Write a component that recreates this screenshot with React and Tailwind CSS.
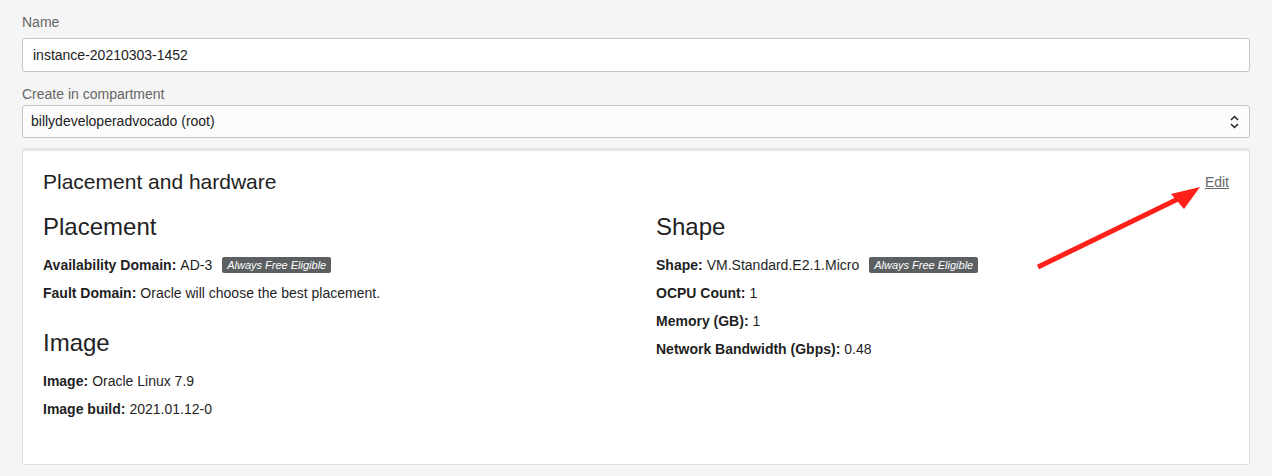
import React from "react";

const font = { fontFamily: '"Liberation Sans", Arial, Helvetica, sans-serif' };

function Badge() {
  return (
    <span className="ml-[10px] inline-flex h-[16px] items-center rounded-[2px] bg-[#5c5f62] px-[5px] text-[11px] italic leading-none text-white">
      Always Free Eligible
    </span>
  );
}

function Row({ label, value, badge }) {
  return (
    <div className="flex h-[28px] items-center text-[14px] text-[#1f1f1f]">
      <span className="font-bold">{label}</span>
      <span className="ml-[4px]">{value}</span>
      {badge && <Badge />}
    </div>
  );
}

export default function App() {
  return (
    <div className="relative h-[476px] w-[1272px] bg-[#f5f5f5] px-[22px] pt-[12px]" style={font}>
      <div className="text-[14px] leading-[20px] text-[#666]">Name</div>
      <div className="mt-[6px] flex h-[34px] items-center rounded-[3px] border border-[#c4c6cc] bg-white px-[10px] text-[14px] text-[#222]">
        instance-20210303-1452
      </div>
      <div className="mt-[12px] text-[14px] leading-[20px] text-[#666]">Create in compartment</div>
      <div className="mt-[1px] flex h-[33px] items-center justify-between rounded-[3px] border border-[#c4c6cc] bg-[#fcfcfc] pl-[8px] pr-[10px] text-[14px] text-[#222]">
        <span>billydeveloperadvocado (root)</span>
        <svg width="9" height="14" viewBox="0 0 9 14" fill="none" stroke="#222" strokeWidth="1.5">
          <path d="M1 5 L4.5 1.5 L8 5" />
          <path d="M1 9 L4.5 12.5 L8 9" />
        </svg>
      </div>
      <div className="mt-[10px] h-[317px] rounded-[3px] border border-[#dedfe2] border-t-[3px] border-t-[#e3e3e6] bg-white pl-[20px] pr-[20px] pt-[18px]">
        <div className="flex items-center justify-between">
          <div className="text-[21px] leading-[26px] text-[#222]">Placement and hardware</div>
          <a className="text-[14px] text-[#666] underline">Edit</a>
        </div>
        <div className="mt-[14px] grid grid-cols-2 gap-x-[40px]">
          <div>
            <div className="text-[24px] leading-[36px] text-[#222]">Placement</div>
            <div className="mt-[6px]">
              <Row label="Availability Domain:" value="AD-3" badge />
              <Row label="Fault Domain:" value="Oracle will choose the best placement." />
            </div>
            <div className="mt-[18px] text-[24px] leading-[36px] text-[#222]">Image</div>
            <div className="mt-[6px]">
              <Row label="Image:" value="Oracle Linux 7.9" />
              <Row label="Image build:" value="2021.01.12-0" />
            </div>
          </div>
          <div>
            <div className="text-[24px] leading-[36px] text-[#222]">Shape</div>
            <div className="mt-[6px]">
              <Row label="Shape:" value="VM.Standard.E2.1.Micro" badge />
              <Row label="OCPU Count:" value="1" />
              <Row label="Memory (GB):" value="1" />
              <Row label="Network Bandwidth (Gbps):" value="0.48" />
            </div>
          </div>
        </div>
      </div>
      <svg className="absolute left-0 top-0" width="1272" height="476" style={{ pointerEvents: "none" }}>
        <line x1="1038" y1="267" x2="1180" y2="198" stroke="#ff2119" strokeWidth="5" />
        <polygon points="1200,187 1171,194 1184,209" fill="#ff2119" />
      </svg>
    </div>
  );
}
